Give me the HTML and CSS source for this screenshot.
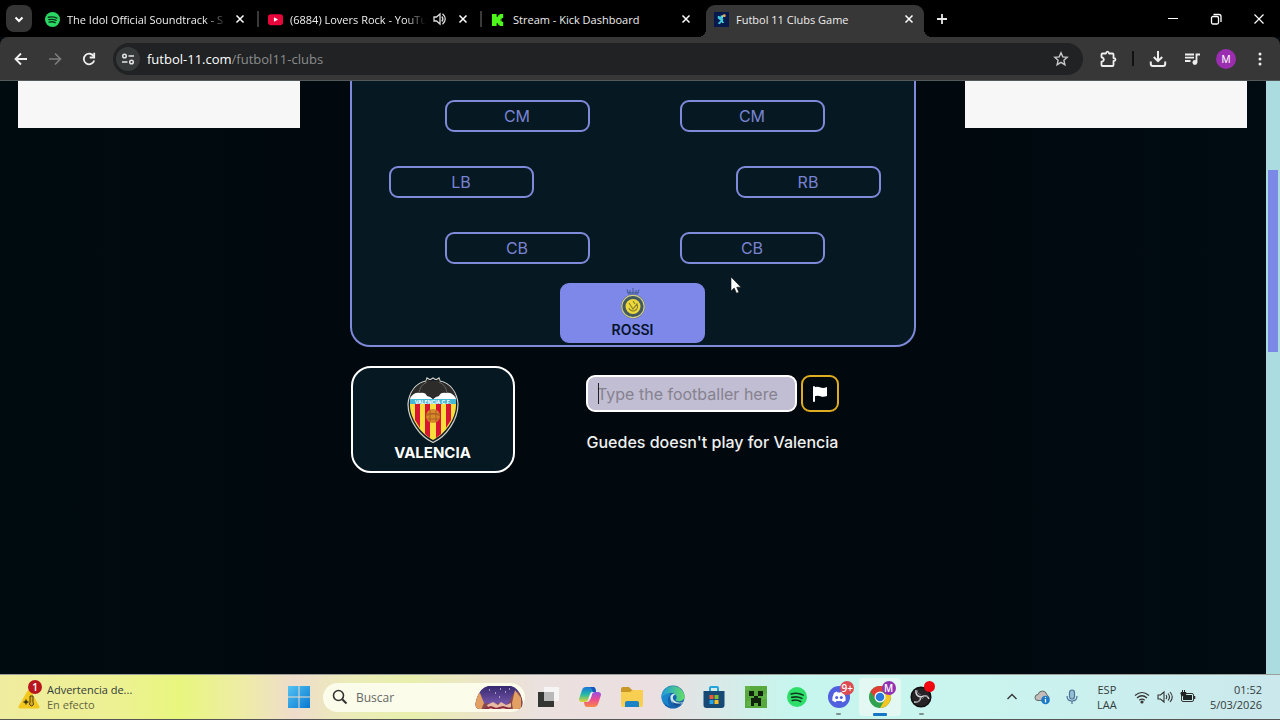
FILE: index.html
```
<!DOCTYPE html>
<html lang="es">
<head>
    <meta charset="UTF-8">
    <meta name="viewport" content="width=device-width, initial-scale=1.0">
    <title>Futbol 11 Clubs Game</title>
    <link rel="stylesheet" href="styles.css">
</head>
<body>

<!-- Browser tabs -->
<header class="tab-strip">
    <button class="tab-search" aria-label="Search tabs">
        <svg width="12" height="12" viewBox="0 0 12 12"><path d="M2.5 4.5L6 8l3.5-3.5" fill="none" stroke="#fff" stroke-width="2"/></svg>
    </button>
    <nav class="tabs">
        <div class="tab">
            <svg class="favicon" viewBox="0 0 16 16"><circle cx="8" cy="8" r="8" fill="#2bd864"/><path d="M3.500 5.600q4.800-1.300 9.200.9M4 8.200q4-1.100 7.900.8M4.400 10.700q3.400-.9 6.500.7" fill="none" stroke="#0b3318" stroke-width="1.400" stroke-linecap="round"/></svg>
            <a class="tab-title faded" href="#">The Idol Official Soundtrack - S</a>
            <button class="tab-close" aria-label="Close tab"><svg viewBox="0 0 10 10"><path d="M1.500 1.500l7 7m0-7l-7 7"/></svg></button>
        </div>
        <div class="tab">
            <svg class="favicon" viewBox="0 0 16 16"><rect y="2.500" width="16" height="11.500" rx="3" fill="#e8063a"/><path d="M6.300 5.500v5L10.700 8z" fill="#fff"/></svg>
            <a class="tab-title faded" href="#">(6884) Lovers Rock - YouTu</a>
            <svg class="tab-sound" width="14" height="14" viewBox="0 0 14 14"><path d="M1 5h2.500L7 2v10L3.500 9H1z" fill="none" stroke="#ddd" stroke-width="1.300"/><path d="M8.800 4.500q2.200 2.500 0 5M9.500 1.800q5.500 5.200 0 10.400" fill="none" stroke="#ddd" stroke-width="1.300"/></svg>
            <button class="tab-close" aria-label="Close tab"><svg viewBox="0 0 10 10"><path d="M1.500 1.500l7 7m0-7l-7 7"/></svg></button>
        </div>
        <div class="tab">
            <svg class="favicon" viewBox="0 0 16 16"><path d="M1 2h5v3h1.500V3.500H9V2h4v4.500h-1.500V8H10v1h1.500v1.500H13V15H9v-1.500H7.500V12H6v3H1z" fill="#4df71c"/></svg>
            <a class="tab-title" href="#">Stream - Kick Dashboard</a>
            <button class="tab-close" aria-label="Close tab"><svg viewBox="0 0 10 10"><path d="M1.500 1.500l7 7m0-7l-7 7"/></svg></button>
        </div>
        <div class="tab active">
            <svg class="favicon" viewBox="0 0 16 16"><rect width="16" height="16" fill="#07184d"/><path d="M4 4l4 1 2 3-1 2-3 3-2-1 3-3-3-2z" fill="#3dc9d8"/><path d="M7 4l4-1-2 4zM8 9l3 2-2 1z" fill="#6fe6ed"/><circle cx="11" cy="4" r="1.500" fill="#eda743"/></svg>
            <a class="tab-title" href="#">Futbol 11 Clubs Game</a>
            <button class="tab-close" aria-label="Close tab"><svg viewBox="0 0 10 10"><path d="M1.500 1.500l7 7m0-7l-7 7"/></svg></button>
        </div>
    </nav>
    <button class="new-tab" aria-label="New tab"><svg width="12" height="12" viewBox="0 0 12 12"><path d="M6 1v10M1 6h10" stroke="#e8e8e8" stroke-width="1.800"/></svg></button>
    <div class="window-controls">
        <button aria-label="Minimize"><svg width="12" height="12" viewBox="0 0 12 12"><path d="M1 5.500h10" stroke="#fff"/></svg></button>
        <button aria-label="Restore"><svg width="12" height="12" viewBox="0 0 12 12" fill="none" stroke="#fff" stroke-width="1.300"><rect x="1.500" y="3.500" width="7" height="7.500" rx="1.500"/><path d="M3.500 1.500H9q2 0 2 2V9"/></svg></button>
        <button aria-label="Close"><svg width="12" height="12" viewBox="0 0 12 12"><path d="M1.500 1.500l9 9m0-9l-9 9" stroke="#fff" stroke-width="1.200"/></svg></button>
    </div>
</header>

<!-- Address bar -->
<div class="toolbar">
    <button class="tool" aria-label="Back"><svg width="16" height="16" viewBox="0 0 16 16"><path d="M14 8H3m5-5.500L2.500 8 8 13.500" fill="none" stroke="#f0f0f0" stroke-width="1.800"/></svg></button>
    <button class="tool" aria-label="Forward"><svg width="16" height="16" viewBox="0 0 16 16"><path d="M2 8h11M8 2.500L13.500 8 8 13.500" fill="none" stroke="#7d7d7d" stroke-width="1.600"/></svg></button>
    <button class="tool" aria-label="Reload"><svg width="16" height="16" viewBox="0 0 16 16"><path d="M12.800 5.500A5.300 5.300 0 1 0 13.200 9.500" fill="none" stroke="#f0f0f0" stroke-width="1.800"/><path d="M13.200 1.800V6.500H8.700" fill="none" stroke="#f0f0f0" stroke-width="1.800"/></svg></button>
    <div class="address">
        <button class="site-info" aria-label="Site information"><svg width="14" height="14" viewBox="0 0 14 14" fill="none" stroke="#e4e4e4" stroke-width="1.500"><circle cx="3.500" cy="4" r="1.800"/><path d="M7.500 4H13M1 10h5.500"/><circle cx="10.500" cy="10" r="1.800"/></svg></button>
        <a class="url" href="#"><span>futbol-11.com</span>/futbol11-clubs</a>
        <button class="bookmark" aria-label="Bookmark"><svg width="16" height="16" viewBox="0 0 16 16"><path d="M8 1.800l1.800 4.100 4.400.4-3.300 3 1 4.400L8 11.300l-3.900 2.400 1-4.400-3.300-3 4.400-.4z" fill="none" stroke="#c8c8c8" stroke-width="1.400"/></svg></button>
    </div>
    <button class="tool" aria-label="Extensions"><svg width="18" height="18" viewBox="0 0 18 18"><path d="M2.500 4.500Q2.500 3.500 3.500 3.500H7Q7.200 1.700 8.500 1.700T10 3.500h3.500q1 0 1 1V8q2 .2 2 1.500t-2 1.500v4q0 1-1 1h-10q-1 0-1-1v-3.300q2.300-.3 2.300-2.200T2.500 7.300z" fill="none" stroke="#eee" stroke-width="1.800" stroke-linejoin="round"/></svg></button>
    <span class="tool-divider"></span>
    <button class="tool" aria-label="Downloads"><svg width="18" height="18" viewBox="0 0 18 18"><path d="M9 1v9.500M4.800 7L9 11.200 13.200 7M1.800 11.500V14q0 2 2 2h10.400q2 0 2-2v-2.500" fill="none" stroke="#eee" stroke-width="2"/></svg></button>
    <button class="tool" aria-label="Media"><svg width="16" height="16" viewBox="0 0 16 16"><path d="M1 3.500h9M1 6.700h9M1 10h5.500M12.500 11.500V3.500H16" fill="none" stroke="#eee" stroke-width="1.800"/><circle cx="10.900" cy="11.500" r="2.400" fill="#eee"/></svg></button>
    <button class="tool" aria-label="Profile"><span class="avatar">M</span></button>
    <button class="tool" aria-label="Menu"><svg width="4" height="16" viewBox="0 0 4 16" fill="#eee"><circle cx="2" cy="3" r="1.500"/><circle cx="2" cy="8" r="1.500"/><circle cx="2" cy="13" r="1.500"/></svg></button>
</div>

<!-- Game page -->
<div class="viewport">
    <div class="page">
        <aside class="ad"></aside>
        <main class="game">
            <section class="pitch">
                <div class="line">
                    <button class="slot">CM</button>
                    <button class="slot">CM</button>
                </div>
                <div class="line wide">
                    <button class="slot">LB</button>
                    <button class="slot">RB</button>
                </div>
                <div class="line">
                    <button class="slot">CB</button>
                    <button class="slot">CB</button>
                </div>
                <button class="slot filled">
                    <svg width="26" height="32" viewBox="0 0 26 32">
                        <path d="M7 2.500l1.500 4.500h9L19 2.500" fill="none" stroke="#4d62a0" stroke-width="1.200"/>
                        <path d="M10 3v4M13 1v6M16 3v4M7 5.500h12" stroke="#4d62a0" stroke-width="1.200"/>
                        <circle cx="13" cy="19.500" r="12" fill="#435a5f"/>
                        <circle cx="13" cy="19.500" r="11.200" fill="none" stroke="#d6d18b" stroke-width="1.200"/>
                        <circle cx="13" cy="19.500" r="7.500" fill="#efd83c"/>
                        <path d="M9 16l4 6 4-5q2 5-3 7-4 0-5-3M13 14l2 3" fill="none" stroke="#87832e" stroke-width="1.200"/>
                    </svg>
                    <span>ROSSI</span>
                </button>
            </section>

            <section class="play">
                <div class="club">
                    <svg width="52" height="66" viewBox="0 0 52 66">
                        <path d="M26 65.500C13 60 1 43 1 27 2 15 9 6 19 4l1-3 2.500 1.500h1L26 1l2.500 1.500h1L32 1l1 3c10 2 17 11 18 23 0 16-12 33-25 38.500z" fill="#171e25" stroke="#d2d2ca" stroke-width="1.200"/>
                        <path d="M3 22h46v6C49 42 38 57 26 63 14 57 3 42 3 28z" fill="#f9df3b"/>
                        <path d="M8 27h5v24l-5-8zM18 27h5v34l-5-4zM29 27h5v30l-5 4zM39 27h5v16l-5 8z" fill="#d81534"/>
                        <path d="M3 22q1-7 8-8 6-1 11 4l4 4 4-4q5-5 11-4 7 1 8 8z" fill="#fff"/>
                        <path d="M3 21C5 12 11 6 19 5l1-3 2.500 2h7L32 2l1 3c8 1 14 7 16 16-3-5-7-6-10-5-3-1-6 0-7 3l-3 1-3 2-3-2-3-1c-1-3-4-4-7-3-3-1-7 0-10 5z" fill="#2d2c2b"/>
                        <path d="M20 5q-7 3-8 11M32 5q7 3 8 11" fill="none" stroke="#7b7876" stroke-width=".7"/>
                        <path d="M3 22h46v5H3z" fill="#46b8d4"/>
                        <text class="crest-name" x="26" y="26.500" text-anchor="middle">VALENCIA C.F.</text>
                        <circle cx="26" cy="39" r="7" fill="#d78a2a"/>
                        <path d="M19.500 37h13M20 42h12M23 33v12M29 33v12M19 39q7-5 14 0" fill="none" stroke="#a95b21" stroke-width=".9"/>
                    </svg>
                    <h2>VALENCIA</h2>
                </div>
                <form class="answer">
                    <div class="guess">
                        <div class="field">
                            <input type="text" placeholder="Type the footballer here" aria-label="Type the footballer here">
                            <span class="caret"></span>
                        </div>
                        <button class="skip" type="button" aria-label="Give up">
                            <svg width="16" height="18" viewBox="0 0 16 18" fill="#fff"><rect x="1" y="1" width="2" height="16" rx="1"/><path d="M2 2.500q3.500-1.500 6.500 0 3 1 6.500-.5v9q-3.500 1.500-6.500.3-3-1.300-6.500.2z"/></svg>
                        </button>
                    </div>
                    <p>Guedes doesn't play for Valencia</p>
                </form>
            </section>
        </main>
        <aside class="ad"></aside>
    </div>
    <div class="scrollbar"><div class="scroll-thumb"></div></div>
</div>

<svg class="cursor" width="12" height="18" viewBox="0 0 12 18"><path d="M1 1v14l3.200-3 2.300 5.200 2.400-1-2.200-5H11z" fill="#fff" stroke="#111" stroke-width=".6"/></svg>

<!-- Windows taskbar -->
<footer class="taskbar">
    <button class="widget">
        <span class="warning">
            <svg width="22" height="20" viewBox="0 0 22 20"><path d="M11 1q1 0 2 1.500l8.500 15q.5 2-1.500 2H2q-2 0-1.500-2L9 2.500Q10 1 11 1z" fill="#f2c81d"/><path d="M12 7v6.500a2 2 0 1 0 3 0V7z" fill="#dbab20" stroke="#4a3c10"/><circle cx="8" cy="13" r="1.800" fill="#3d3414"/><path d="M8 10v6M5 13h6" stroke="#3d3414" stroke-width=".7"/></svg>
            <span class="badge">1</span>
        </span>
        <span class="widget-text">Advertencia de...<small>En efecto</small></span>
    </button>
    <button class="start" aria-label="Start"><svg width="22" height="22" viewBox="0 0 22 22"><defs><linearGradient id="win" x2="1" y2="1"><stop stop-color="#54c3f3"/><stop offset="1" stop-color="#0878d1"/></linearGradient></defs><path d="M0 0h10.500v10.500H0zM11.500 0H22v10.500H11.500zM0 11.500h10.500V22H0zM11.500 11.500H22V22H11.500z" fill="url(#win)"/></svg></button>
    <label class="search">
        <svg width="16" height="16" viewBox="0 0 16 16"><circle cx="6.500" cy="6.500" r="5" fill="none" stroke="#333" stroke-width="1.600"/><path d="M10.200 10.200L14.500 14.500" stroke="#333" stroke-width="2"/></svg>
        <input type="text" placeholder="Buscar" aria-label="Buscar">
        <svg width="48" height="25" viewBox="0 0 48 25">
            <defs><clipPath id="pill"><path d="M13 1h23q8 2 11 13 2 10-5 10H5Q-2 24 2 13 5 3 13 1z"/></clipPath><linearGradient id="night" x2="0" y2="1"><stop stop-color="#31256c"/><stop offset="1" stop-color="#8a66bc"/></linearGradient></defs>
            <g clip-path="url(#pill)"><path d="M0 0h48v25H0z" fill="url(#night)"/><path d="M0 8l5 2 3 9 5-1 5 3 5-3 6 3 5-3 4-9 10-4v20H0z" fill="#8a4a4c"/><path d="M0 10l5-2 4 10-3 7H0zM40 5l6 8v12h-8l-1-7z" fill="#e3a063"/><path d="M12 20l6-3 5 3 3-3 5 3 5-2v4l-6 2H14z" fill="#e8bba5"/><path d="M14 5h1M20 8h1M25 4h1M30 7h1M34 4h1M24 12h1" stroke="#fff"/><path d="M10 24l6-2 5 2 7-2 7 2" stroke="#8c2c3f" stroke-width="2" fill="none"/></g>
        </svg>
    </label>
    <nav class="apps">
        <button aria-label="Task view"><svg width="24" height="22" viewBox="0 0 24 22"><path d="M7 1h15v14H7z" fill="#f6f4f4"/><path d="M1 6h16v15H1z" fill="#333633"/><path d="M7 6h10v9H7z" fill="#b8b9b8"/></svg></button>
        <button aria-label="Copilot"><svg width="24" height="22" viewBox="0 0 24 22"><defs><linearGradient id="copa" x2="0" y2="1"><stop stop-color="#1873dc"/><stop offset=".5" stop-color="#27bba7"/><stop offset="1" stop-color="#e5d32e"/></linearGradient><linearGradient id="copb" x2="0" y2="1"><stop stop-color="#9750e3"/><stop offset=".5" stop-color="#ec4d92"/><stop offset="1" stop-color="#f98943"/></linearGradient></defs><path d="M8 1h7q2 0 2.500 2L18 6h-3q-2 0-3 2l-2 6q-1 2-3 2H4q-3 0-3-3l3-9q1-3 4-3z" fill="url(#copa)"/><path d="M16 21H9q-2 0-2.500-2L6 16h3q2 0 3-2l2-6q1-2 3-2h3q3 0 3 3l-3 9q-1 3-4 3z" fill="url(#copb)"/><path d="M8 1h7q2 0 2.500 2L18 6h-3q-1-4-3-5z" fill="#1755bd"/><path d="M10.500 13l2-5.500q.5-1.500 2-1.500L13 11.500q-.5 1.500-2.500 1.500z" fill="#f3eff0"/></svg></button>
        <button aria-label="File explorer"><svg width="24" height="22" viewBox="0 0 24 22"><path d="M1 3q0-2 2-2h6l3 3h9q2 0 2 2v4H1z" fill="#c89726"/><path d="M1 6h9l3-2h9q1 0 1 1v14q0 2-2 2H3q-2 0-2-2z" fill="#f8cf50"/><path d="M5 21v-4q0-2 2-2h10q2 0 2 2v4z" fill="#1b83c5"/></svg></button>
        <button aria-label="Edge"><svg width="24" height="24" viewBox="0 0 24 24"><defs><linearGradient id="edge"><stop stop-color="#1f99db"/><stop offset="1" stop-color="#62de65"/></linearGradient></defs><circle cx="12" cy="12" r="11.500" fill="#1563ae"/><path d="M.5 12C1-2 21-3 23.500 11c.5 5-6 7-9 4 4-5-4-10-9-5Q2 13 3 18 .5 16 .5 12z" fill="url(#edge)"/><path d="M1 12q5-5 9-3-6 5-1 12Q1 19 1 12z" fill="#1b86cc"/><path d="M14.500 9q-4 2-2 6 4 4 10 2-3 4-7 3-7-2-6-9 2-3 5-2z" fill="#cfe8eb"/><path d="M10 14q2 6 11 4-7 8-11-4z" fill="#174c8b"/></svg></button>
        <button aria-label="Store"><svg width="24" height="24" viewBox="0 0 24 24"><path d="M8 7V3q0-1 1-1h6q1 0 1 1v4" fill="none" stroke="#22a5db" stroke-width="2"/><path d="M1.500 6h21v14q0 3-3 3h-15q-3 0-3-3z" fill="#174975"/><path d="M7.500 10h4v4h-4z" fill="#ed5938"/><path d="M12.500 10h4v4h-4z" fill="#85bd31"/><path d="M7.500 15h4v4h-4z" fill="#24a5e8"/><path d="M12.500 15h4v4h-4z" fill="#f4bd2d"/></svg></button>
        <button aria-label="Minecraft"><svg width="24" height="24" viewBox="0 0 24 24"><path d="M1 1h22v22H1z" fill="#57a83d"/><path d="M1 1h5v4H1zM18 9h5v5h-5zM3 16h4v5H3z" fill="#62b449"/><path d="M5 6h5v5H5zM14 6h5v5h-5zM10 11h4v2h3v8h-3v-3h-4v3H7v-8h3z" fill="#10210d"/></svg></button>
        <button aria-label="Spotify"><svg width="20" height="20" viewBox="0 0 16 16"><circle cx="8" cy="8" r="8" fill="#2dde69"/><path d="M3.300 5.600q5-1.500 9.600.9M3.800 8.300q4.200-1.200 8.100.8M4.200 10.800q3.600-1 6.700.8" fill="none" stroke="#11361d" stroke-width="1.300" stroke-linecap="round"/></svg></button>
        <button class="running" aria-label="Discord"><svg width="22" height="22" viewBox="0 0 22 22"><circle cx="11" cy="11" r="11" fill="#5060de"/><path d="M6 7q2-1.500 3-1.500l.6 1h2.800l.6-1q2 0 3 1.500 2 4 1.700 7.500-2 1.500-3.500 1.700l-.8-1.400q-2.400.6-4.800 0l-.8 1.400q-2-.3-3.500-1.700Q4 11 6 7z" fill="#fff"/><circle cx="8.700" cy="11.500" r="1.500" fill="#5060de"/><circle cx="13.300" cy="11.500" r="1.500" fill="#5060de"/></svg><span class="badge">9+</span></button>
        <button class="running current" aria-label="Chrome"><svg width="22" height="22" viewBox="0 0 22 22"><circle cx="11" cy="11" r="11" fill="#30a14d"/><path d="M1.500 5.500A11 11 0 0 1 20.500 5.500H11L7 13.500z" fill="#df3e35"/><path d="M20.500 5.500A11 11 0 0 1 11 22l4.800-8.200L16 8V5.500z" fill="#f5c725"/><circle cx="11" cy="11" r="5.500" fill="#fff"/><circle cx="11" cy="11" r="4.300" fill="#2778df"/></svg><span class="badge profile">M</span></button>
        <button class="running" aria-label="OBS"><svg width="22" height="22" viewBox="0 0 22 22"><circle cx="11" cy="11" r="9.800" fill="#262327" stroke="#111" stroke-width="1.500"/><path d="M11 11Q5 10 6 4M11 11q6-3 8 2M11 11q-1 6-7 5" fill="none" stroke="#d7dada" stroke-width="1.400"/><path d="M7 4q0 4 4 5M18 10q-4-1-6 3M6 16q4 0 4-5" fill="none" stroke="#77777c"/></svg><span class="badge rec"></span></button>
    </nav>
    <div class="tray">
        <button aria-label="Hidden icons"><svg width="12" height="12" viewBox="0 0 12 12"><path d="M1.500 8L6 3.500 10.500 8" fill="none" stroke="#333" stroke-width="1.300"/></svg></button>
        <button aria-label="OneDrive"><svg width="16" height="16" viewBox="0 0 16 16"><path d="M4 11.500q-3 0-3-3t3-3Q5 2 8.500 2T13 6q2 1 2 3t-2 2.500z" fill="#c3bcbb" stroke="#5f6867"/><circle cx="11.500" cy="11" r="4.300" fill="#1879c8"/><path d="M11.500 10v3.500M11.500 8v1" stroke="#fff" stroke-width="1.300"/></svg></button>
        <button aria-label="Microphone"><svg width="14" height="16" viewBox="0 0 14 16" fill="none" stroke="#4b7297" stroke-width="1.200"><rect x="4.500" y="1" width="5" height="9" rx="2.500" fill="#96bfd4"/><path d="M2 7q0 5 5 5t5-5M7 12v3"/></svg></button>
        <button class="language">ESP<br>LAA</button>
        <button class="quick" aria-label="Network, sound and battery">
            <svg width="16" height="16" viewBox="0 0 16 16" fill="none" stroke="#333" stroke-width="1.200"><path d="M1 6.500q7-6 14 0M3 9q5-4.500 10 0M5.300 11.200q2.700-2.200 5.400 0"/><circle cx="8" cy="13" r="1" fill="#333"/></svg>
            <svg width="16" height="16" viewBox="0 0 16 16" fill="none" stroke="#333" stroke-width="1.100"><path d="M1 6h2.500L7 3v10l-3.500-3H1zM9 6q1.500 2 0 4M11 4.500q3 3.500 0 7M13 3q4.500 5 0 10"/></svg>
            <svg width="16" height="16" viewBox="0 0 16 16"><rect x="1.500" y="4.500" width="12" height="8" rx="1.500" fill="#cdeeeb" stroke="#333"/><path d="M4 6h8v5H3V8z" fill="#1c2626"/><path d="M14.500 7v3" stroke="#333" stroke-width="1.500"/><path d="M2.500 1v2M4.500 1v2M1 3.500h5V5q-.5 2-2.500 2T1 5z" fill="#222" stroke="#222"/></svg>
        </button>
        <button class="clock">01:52<br>5/03/2026</button>
    </div>
</footer>

</body>
</html>
```
FILE: styles.css
```
* {
    box-sizing: border-box;
}
body {
    margin: 0;
    min-height: 100vh;
    display: flex;
    flex-direction: column;
    background-color: #010a10;
    color: white;
    font-family: Inter, "Liberation Sans", sans-serif;
}
button {
    padding: 0;
    border: none;
    background: none;
    color: inherit;
    font: inherit;
    cursor: pointer;
    display: flex;
    align-items: center;
    justify-content: center;
}
a {
    color: inherit;
    text-decoration: none;
}
svg {
    flex-shrink: 0;
}

/* Browser */
.tab-strip {
    height: 37px;
    display: flex;
    align-items: center;
    padding-left: 6px;
    background-color: #000;
    font-family: "Open Sans", "Noto Sans", sans-serif;
    font-size: 11px;
    font-weight: 500;
}
.tab-search {
    width: 26px;
    height: 27px;
    border-radius: 8px;
    background-color: #353535;
}
.tabs {
    flex: 0 1 887px;
    min-width: 0;
    align-self: stretch;
    display: flex;
    gap: 5px;
    margin-left: 5px;
    padding-top: 5px;
}
.tab {
    flex: 1;
    min-width: 0;
    display: flex;
    align-items: center;
    gap: 7px;
    padding: 0 10px 4px 8px;
    position: relative;
}
.tab:nth-child(-n+2)::after {
    content: "";
    position: absolute;
    right: -4px;
    top: 6px;
    width: 2px;
    height: 16px;
    background-color: #3a3a3a;
}
.tab.active {
    border-radius: 9px 9px 0 0;
    background-color: #373737;
}
.tab.active::before,
.tab.active::after {
    content: "";
    position: absolute;
    bottom: 0;
    left: -8px;
    width: 8px;
    height: 8px;
    background: radial-gradient(circle at 0 0, #000 8px, #373737 8px);
}
.tab.active::after {
    left: 100%;
    background: radial-gradient(circle at 100% 0, #000 8px, #373737 8px);
}
.favicon {
    width: 15px;
    height: 15px;
}
.tab-title {
    flex: 1;
    min-width: 0;
    white-space: nowrap;
    color: #eee;
}
.tab-title.faded {
    -webkit-mask-image: linear-gradient(to right, #000 85%, transparent);
    mask-image: linear-gradient(to right, #000 85%, transparent);
}
.tab-close svg {
    width: 10px;
    height: 10px;
    stroke: #fff;
    stroke-width: 1.5;
}
.tab-sound {
    margin-right: 4px;
}
.new-tab {
    width: 36px;
    height: 28px;
}
.window-controls {
    display: flex;
    align-self: stretch;
    margin-left: auto;
}
.window-controls button {
    width: 43px;
}
.toolbar {
    height: 44px;
    display: flex;
    align-items: center;
    padding: 0 3px 0 4px;
    border-bottom: 1px solid #545a5c;
    border-radius: 8px 8px 0 0;
    background-color: #373737;
}
.tool {
    width: 34px;
    height: 32px;
}
.tool-divider {
    width: 2px;
    height: 15px;
    margin: 0 7px;
    background-color: #111;
}
.address {
    flex: 1;
    min-width: 0;
    height: 32px;
    display: flex;
    align-items: center;
    gap: 7px;
    margin: 0 8px 0 7px;
    padding: 0 14px 0 3px;
    border-radius: 16px;
    background-color: #202223;
}
.site-info {
    width: 24px;
    height: 24px;
    border-radius: 50%;
    background-color: #373a3b;
}
.url {
    flex: 1;
    color: #8b8d8e;
    font-family: "Open Sans", "Noto Sans", sans-serif;
    font-size: 13px;
}
.url span {
    color: #fff;
}
.avatar {
    width: 20px;
    height: 20px;
    border-radius: 50%;
    background-color: #9a2db0;
    font-size: 10px;
    line-height: 20px;
}

/* Page */
.viewport {
    flex: 1;
    display: flex;
}
.page {
    flex: 1;
    display: flex;
    align-items: flex-start;
    justify-content: space-between;
    padding: 0 19px 0 18px;
    background: linear-gradient(to right, #000b10, #01090e 27%, #01090e 72%, #000b12);
}
.ad {
    width: 282px;
    height: 47px;
    background-color: #f7f7f7;
}
.game {
    width: 566px;
}
.pitch {
    display: flex;
    flex-direction: column;
    align-items: center;
    padding: 19px 0 2px;
    border: 2px solid #7f8ada;
    border-top: none;
    border-radius: 0 0 20px 20px;
    background-color: #061822;
}
.line {
    width: 384px;
    display: flex;
    justify-content: space-between;
    margin-bottom: 34px;
    padding-left: 4px;
}
.line.wide {
    width: 496px;
}
.line:nth-child(3) {
    margin-bottom: 19px;
}
.slot {
    width: 145px;
    height: 32px;
    border: 2px solid #7f8ada;
    border-radius: 9px;
    color: #7883d2;
    font-size: 16px;
}
.slot.filled {
    height: 60px;
    flex-direction: column;
    gap: 2px;
    background-color: #7d88e8;
    border-color: #7d88e8;
    color: #06142b;
    font-size: 14px;
    font-weight: 600;
    line-height: 18px;
}
.play {
    display: flex;
    align-items: flex-start;
    margin-top: 19px;
    padding: 0 5px 0 1px;
}
.club {
    width: 164px;
    height: 107px;
    display: flex;
    flex-direction: column;
    align-items: center;
    padding-top: 9px;
    border: 2px solid #fff;
    border-radius: 20px;
    background-color: #061822;
}
.club h2 {
    margin: 0;
    font-size: 15px;
    font-weight: 700;
    line-height: 20px;
}
.crest-name {
    font-size: 5px;
    font-weight: 700;
    fill: #fff;
}
.answer {
    flex: 1;
    display: flex;
    flex-direction: column;
    align-items: center;
    padding-top: 9px;
}
.guess {
    display: flex;
    gap: 4px;
}
.field {
    position: relative;
}
.field input {
    width: 211px;
    height: 37px;
    padding: 0 9px;
    border: 2px solid #fff;
    border-radius: 9px;
    background-color: #c1bdd2;
    font: inherit;
    font-size: 16px;
}
.field input::placeholder {
    color: #85828f;
}
.caret {
    position: absolute;
    left: 12px;
    top: 8px;
    width: 1px;
    height: 21px;
    background-color: #222;
}
.skip {
    width: 38px;
    height: 37px;
    border: 2px solid #e0ac22;
    border-radius: 9px;
}
.answer p {
    margin: 18px 0 0;
    font-size: 16px;
    font-weight: 500;
    line-height: 24px;
    color: #f0f0f0;
}
.scrollbar {
    width: 14px;
    padding: 89px 2px 0;
    background-color: #abdde0;
}
.scroll-thumb {
    height: 182px;
    background-color: #7b88e6;
}
.cursor {
    position: absolute;
    left: 730px;
    top: 276px;
}

/* Taskbar */
.taskbar {
    height: 46px;
    display: flex;
    align-items: center;
    padding: 0 18px;
    border-top: 1px solid #9ba19a;
    border-bottom: 1px solid #555;
    background: linear-gradient(to right, #efec9f, #edf193 9%, #e8f67e 14%, #eeeca6 19%, #eedccb 23%, #ebebb9 27%, #e8efad 32%, #ece4cc 38%, #ebe1de 42%, #ebdfe1 51%, #d6ebe8 57%, #c6f6ee 62%, #caf5ef 75%, #cbe8ec);
    color: #333b3b;
    font-family: "Open Sans", "Noto Sans", sans-serif;
    font-size: 11px;
}
.widget {
    width: 260px;
    gap: 7px;
    justify-content: flex-start;
    text-align: left;
    line-height: 15px;
}
.widget small {
    display: block;
    font-size: 11px;
    color: #64663f;
}
.warning {
    position: relative;
    display: flex;
    padding-top: 3px;
}
.badge {
    position: absolute;
    right: -2px;
    top: -6px;
    width: 14px;
    height: 14px;
    border-radius: 50%;
    background-color: #b9151f;
    color: #fff;
    font-size: 10px;
    font-weight: 600;
    line-height: 14px;
    text-align: center;
}
.start {
    width: 41px;
    height: 40px;
}
.search {
    width: 202px;
    height: 29px;
    display: flex;
    align-items: center;
    gap: 8px;
    margin: 0 3px 0 4px;
    padding: 0 2px 0 9px;
    border-radius: 15px;
    background-color: #fbfce9;
}
.search input {
    flex: 1;
    min-width: 0;
    padding: 0;
    border: none;
    background: none;
    font: inherit;
    font-size: 12px;
}
.search input::placeholder {
    color: #666;
}
.apps {
    width: 414px;
    display: flex;
}
.apps button {
    flex: 1;
    height: 38px;
    position: relative;
}
.apps .badge {
    right: 5px;
    top: 3px;
    background-color: #dc4a52;
}
.apps .badge.profile {
    background-color: #9132b2;
}
.apps .badge.rec {
    width: 11px;
    height: 11px;
    right: 7px;
    background-color: #f00510;
}
.running::after {
    content: "";
    position: absolute;
    bottom: 1px;
    width: 5px;
    height: 2px;
    border-radius: 1px;
    background-color: #7c9290;
}
.apps .current {
    border-radius: 4px;
    background-color: #e3f8f3;
}
.current::after {
    width: 14px;
    height: 3px;
    bottom: 0;
    background-color: #1976c4;
}
.tray {
    display: flex;
    align-items: center;
    margin-left: auto;
    line-height: 15px;
}
.tray button {
    width: 30px;
    height: 40px;
}
.tray .language {
    width: 40px;
}
.tray .quick {
    width: 77px;
    gap: 7px;
}
.tray .clock {
    width: auto;
    text-align: right;
    margin-left: 6px;
}
```
